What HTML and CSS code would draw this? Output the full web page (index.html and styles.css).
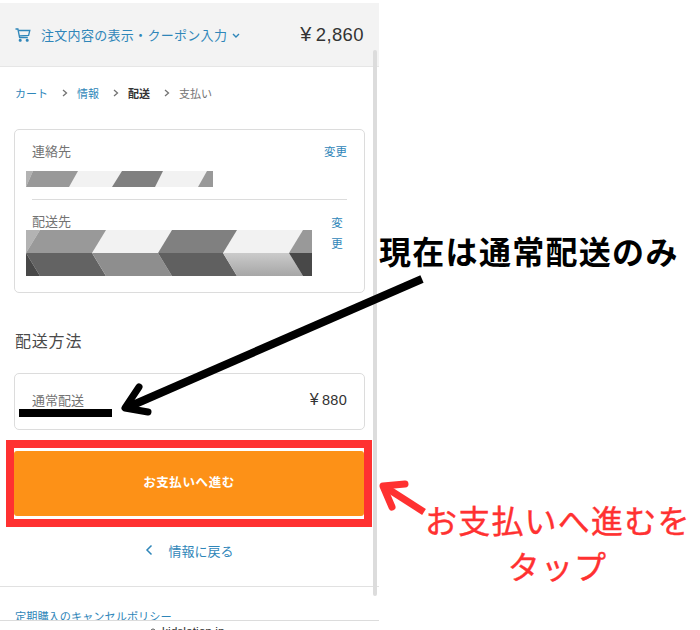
FILE: index.html
```html
<!DOCTYPE html>
<html lang="ja">
<head>
<meta charset="utf-8">
<title>配送</title>
<link rel="stylesheet" href="styles.css">
</head>
<body>
<div class="stage">
  <main class="shop">
    <header class="summary">
      <svg class="cart" viewBox="0 0 16 16" width="16" height="16" fill="none" stroke="#2f86b9" stroke-width="1.3"><path d="M0.5 2h2.4l1.700 8.500h8.200"/><path d="M3.400 3.500h11.400l-1.200 4.800-9.200 0.600"/><circle cx="5.200" cy="13.300" r="0.900" fill="#2f86b9"/><circle cx="12.200" cy="13.300" r="0.900" fill="#2f86b9"/></svg>
      <span class="summary-text">注文内容の表示・クーポン入力</span>
      <svg class="caret" viewBox="0 0 8 6" width="8" height="6" fill="none" stroke="#2f86b9" stroke-width="1.4"><path d="M1 1l3 3 3-3"/></svg>
      <span class="total"><span class="total-yen">¥</span>2,860</span>
    </header>
    <nav class="crumbs">
      <a class="link">カート</a><svg class="chev" viewBox="0 0 6 8" width="6" height="8" fill="none" stroke="#737373" stroke-width="1.3"><path d="M1 1l3.500 3-3.500 3"/></svg>
      <a class="link">情報</a><svg class="chev" viewBox="0 0 6 8" width="6" height="8" fill="none" stroke="#737373" stroke-width="1.3"><path d="M1 1l3.500 3-3.500 3"/></svg>
      <b class="current">配送</b><svg class="chev" viewBox="0 0 6 8" width="6" height="8" fill="none" stroke="#737373" stroke-width="1.3"><path d="M1 1l3.500 3-3.500 3"/></svg>
      <span class="pending">支払い</span>
    </nav>
    <section class="card review">
      <div class="row">
        <span class="label">連絡先</span>
        <a class="link change">変更</a>
      </div>
      <svg class="mask mask-small" viewBox="0 0 187 16" width="187" height="16">
        <rect width="187" height="16" fill="#f2f2f2"/>
        <polygon points="0,0 7,0 0,16" fill="#b3b3b3"/>
        <polygon points="7,0 52,0 43,16 0,16" fill="#999"/>
        <polygon points="96,0 137,0 129,16 86,16" fill="#808080"/>
        <polygon points="181,0 187,0 187,16 172,16" fill="#999"/>
      </svg>
      <hr class="divider">
      <div class="row row-address">
        <div class="address">
          <span class="label">配送先</span>
          <svg class="mask mask-large" viewBox="0 0 286 46" width="286" height="46">
            <defs><linearGradient id="fade" x1="0" y1="0" x2="0" y2="1"><stop offset="0" stop-color="#cbcbcb"/><stop offset="1" stop-color="#a6a6a6"/></linearGradient></defs>
            <rect width="286" height="23" fill="#f2f2f2"/>
            <polygon points="0,0 14,0 0,23" fill="#b3b3b3"/>
            <polygon points="14,0 80,0 66,23 0,23" fill="#999"/>
            <polygon points="146,0 211,0 197,23 132,23" fill="#808080"/>
            <polygon points="277,0 286,0 286,23 263,23" fill="#999"/>
            <polygon points="0,23 66,23 80,46 14,46" fill="#636363"/>
            <polygon points="0,23 14,46 0,46" fill="#484848"/>
            <polygon points="66,23 132,23 146,46 80,46" fill="#8e8e8e"/>
            <polygon points="132,23 197,23 211,46 146,46" fill="#606060"/>
            <polygon points="197,23 263,23 277,46 211,46" fill="url(#fade)"/>
            <polygon points="263,23 286,23 286,46 277,46" fill="#484848"/>
          </svg>
        </div>
        <a class="link change-narrow">変更</a>
      </div>
    </section>
    <h2 class="method-title">配送方法</h2>
    <section class="card method">
      <span class="label">通常配送</span>
      <span class="price"><span class="price-yen">¥</span>880</span>
    </section>
    <button class="pay">お支払いへ進む</button>
    <a class="back">
      <svg viewBox="0 0 8 12" width="8" height="12" fill="none" stroke="#2f86b9" stroke-width="1.5"><path d="M6.500 1.500L2 6l4.500 4.500"/></svg>
      <span class="link">情報に戻る</span>
    </a>
    <footer class="policy"><a class="link">定期購入のキャンセルポリシー</a></footer>
  </main>
  <div class="scrollbar"></div>
  <div class="addressbar">
    <svg class="lock" viewBox="0 0 6 6" width="6" height="6" fill="none" stroke="#555" stroke-width="1"><path d="M1 6V3a2 2 0 0 1 4 0v3"/></svg>
    <span>kidslation.jp</span>
  </div>
  <div class="redact"></div>
  <div class="frame"></div>
  <svg class="arrows" viewBox="0 0 700 630" width="700" height="630" fill="none" stroke-linecap="round" stroke-linejoin="round">
    <path d="M422 279L126 408" stroke="#000" stroke-width="8" stroke-linecap="butt"/>
    <path d="M139 387L125 408L148 412" stroke="#000" stroke-width="7"/>
    <path d="M424 512L385 487" stroke="#ff3131" stroke-width="7" stroke-linecap="butt"/>
    <path d="M405 484L383 486L392 507" stroke="#ff3131" stroke-width="7"/>
  </svg>
  <p class="note note-black">現在は通常配送のみ</p>
  <p class="note note-red">お支払いへ進むを<br>タップ</p>
</div>
</body>
</html>
```
FILE: styles.css
```css
* { box-sizing: border-box; }
html, body { margin: 0; padding: 0; background: #fff; }
body { font-family: "Noto Sans CJK JP", "Liberation Sans", sans-serif; color: #333; }
.stage { position: relative; width: 700px; height: 630px; overflow: hidden; }
.shop { width: 379px; padding-top: 3px; }
.link { color: #2f86b9; text-decoration: none; }

.summary { display: flex; align-items: center; height: 64px; padding: 0 15px; background: #f3f3f3; border-bottom: 1px solid #e6e6e6; }
.cart { margin-right: 10px; }
.summary-text { font-size: 13px; color: #2f86b9; letter-spacing: 0.3px; }
.caret { margin-left: 5px; margin-top: 2px; }
.total { margin-left: auto; font-family: "Liberation Sans", sans-serif; font-size: 18.500px; letter-spacing: 0.4px; color: #333; }
.total-yen { margin-right: 4px; font-size: 20px; }

.crumbs { display: flex; align-items: center; height: 20px; margin: 16px 0 0 15px; font-size: 11px; }
.chev { margin: 0 9px 0 14px; }
.current { font-weight: 700; color: #333; }
.pending { color: #737373; }

.card { width: 351px; margin-left: 14px; background: #fff; border: 1px solid #dcdcdc; border-radius: 5px; }
.review { height: 164px; margin-top: 26px; padding: 12px 17px 0 11px; }
.row { display: flex; justify-content: space-between; align-items: flex-start; }
.label { display: block; padding-left: 6px; font-size: 13px; line-height: 18px; color: #737373; }
.change { font-size: 11.500px; line-height: 18px; }
.mask { display: block; }
.mask-small { margin-top: 11px; }
.divider { height: 1px; margin: 12px 0 0 6px; border: 0; background: #dcdcdc; }
.row-address { margin-top: 12px; }
.address .mask-large { margin-top: 0; }
.change-narrow { width: 14px; margin-right: 3px; font-size: 11.500px; line-height: 21px; text-align: center; }

.method-title { margin: 35px 0 0 15px; font-size: 16px; line-height: 24px; font-weight: 400; color: #4a4a4a; letter-spacing: 0.8px; }
.method { display: flex; justify-content: space-between; align-items: center; height: 57px; margin-top: 21px; padding: 0 17px 3px 11px; }
.price { font-family: "Liberation Sans", sans-serif; font-size: 14.500px; letter-spacing: 0.3px; color: #333; }
.price-yen { margin-right: 3px; font-size: 16px; }

.pay { display: block; width: 350px; height: 65px; margin: 21px 0 0 14px; padding: 0 0 4px; border: 0; border-radius: 3px; background: #fd9117; color: #fff; font: 700 12.500px "Noto Sans CJK JP", sans-serif; letter-spacing: 0.6px; }
.back { display: flex; justify-content: center; align-items: center; gap: 15px; height: 20px; margin-top: 24px; font-size: 13px; }
.policy { margin-top: 26px; padding: 21px 0 0 15px; border-top: 1px solid #e1e1e1; font-size: 11.200px; line-height: 16px; }

.scrollbar { position: absolute; left: 373px; top: 50px; width: 4px; height: 546px; border-radius: 2px; background: #dcdcdc; }
.addressbar { display: flex; gap: 6px; position: absolute; left: 0; top: 620px; width: 379px; height: 10px; padding: 4px 0 0 150px; background: #fff; border-top: 1px solid #dcdcdc; font: 12px/14px "Liberation Sans", sans-serif; color: #333; }
.lock { margin-top: 3px; }
.redact { position: absolute; left: 19px; top: 409px; width: 93px; height: 8px; background: #000; }
.frame { position: absolute; left: 6px; top: 440px; width: 366px; height: 87px; border: 8px solid #ff3131; }
.arrows { position: absolute; left: 0; top: 0; }
.note { position: absolute; margin: 0; white-space: nowrap; font-size: 32px; }
.note-black { left: 379px; top: 227px; line-height: 46px; font-weight: 700; color: #000; letter-spacing: 1.300px; }
.note-red { left: 425px; top: 496px; width: 265px; line-height: 46px; text-align: center; color: #ff3131; font-weight: 400; -webkit-text-stroke: 0.4px #ff3131; letter-spacing: 1.200px; }
```
